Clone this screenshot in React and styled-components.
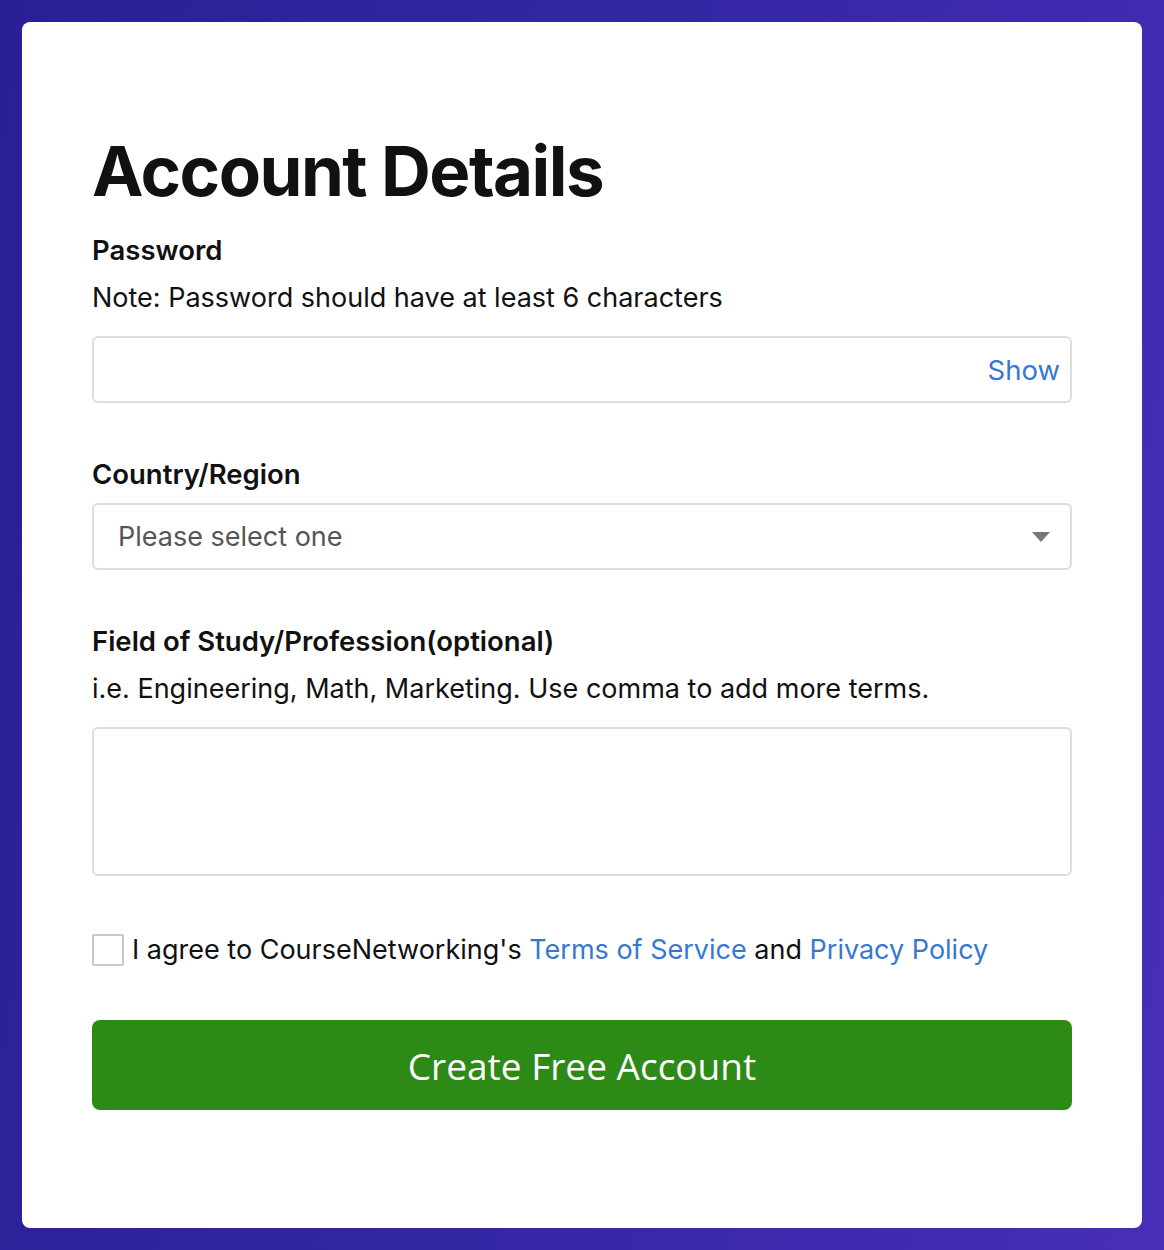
import React, { useState } from 'react';
import styled, { createGlobalStyle } from 'styled-components';

const GlobalStyle = createGlobalStyle`
  html, body {
    margin: 0;
    padding: 0;
  }
  body {
    font-family: Inter, 'Noto Sans', sans-serif;
    color: #111;
  }
  * {
    box-sizing: border-box;
  }
`;

const App = () => {
  const [showPassword, setShowPassword] = useState(false);
  const [agreed, setAgreed] = useState(false);

  return (
    <>
      <GlobalStyle />
      <Page>
        <Card>
          <Title>Account Details</Title>
          <Field>
            <Label>Password</Label>
            <Hint>Note: Password should have at least 6 characters</Hint>
            <InputWrap>
              <Input type={showPassword ? 'text' : 'password'} />
              <ShowButton onClick={() => setShowPassword(!showPassword)}>
                {showPassword ? 'Hide' : 'Show'}
              </ShowButton>
            </InputWrap>
          </Field>
          <Field>
            <Label>Country/Region</Label>
            <SelectWrap>
              <Select defaultValue="">
                <option value="">Please select one</option>
                <option value="us">United States</option>
                <option value="ca">Canada</option>
              </Select>
              <Caret />
            </SelectWrap>
          </Field>
          <Field>
            <Label>Field of Study/Profession(optional)</Label>
            <Hint>i.e. Engineering, Math, Marketing. Use comma to add more terms.</Hint>
            <TextArea />
          </Field>
          <AgreeRow>
            <Checkbox
              type="checkbox"
              checked={agreed}
              onChange={(e) => setAgreed(e.target.checked)}
            />
            <span>
              I agree to CourseNetworking's <Link href="#">Terms of Service</Link> and{' '}
              <Link href="#">Privacy Policy</Link>
            </span>
          </AgreeRow>
          <SubmitButton>Create Free Account</SubmitButton>
        </Card>
      </Page>
    </>
  );
};

export default App;

const Page = styled.div`
  width: 1164px;
  height: 1250px;
  padding: 22px;
  background: linear-gradient(100deg, #2a1f96 0%, #3427a4 50%, #482db8 100%);
`;

const Card = styled.div`
  background: #fff;
  border-radius: 8px;
  height: 100%;
  padding: 115px 70px 0;
  display: flex;
  flex-direction: column;
`;

const Title = styled.h1`
  margin: 0 0 28px;
  font-family: Inter, sans-serif;
  font-size: 69px;
  font-weight: 700;
  letter-spacing: -1.5px;
  line-height: 1;
  color: #111;
`;

const Field = styled.div`
  display: flex;
  flex-direction: column;
  margin-bottom: 55px;
`;

const Label = styled.label`
  font-size: 27.5px;
  font-weight: 600;
  line-height: 32px;
  margin-bottom: 13px;
`;

const Hint = styled.div`
  font-size: 27px;
  line-height: 32px;
  margin-top: 3px;
  margin-bottom: 22px;
`;

const InputWrap = styled.div`
  position: relative;
  height: 67px;
`;

const Input = styled.input`
  width: 100%;
  height: 100%;
  border: 2px solid #ddd;
  border-radius: 6px;
  font-size: 27px;
  padding: 0 100px 0 24px;
  outline: none;
`;

const ShowButton = styled.button`
  position: absolute;
  right: 12px;
  top: 50%;
  transform: translateY(-50%);
  border: none;
  background: none;
  font-family: Inter, sans-serif;
  font-size: 27.5px;
  color: #3777d2;
  cursor: pointer;
  padding: 0;
`;

const SelectWrap = styled.div`
  position: relative;
  height: 67px;
`;

const Select = styled.select`
  width: 100%;
  height: 100%;
  appearance: none;
  border: 2px solid #ddd;
  border-radius: 6px;
  background: #fff;
  font-family: Inter, sans-serif;
  font-size: 27px;
  color: #555;
  padding: 0 60px 0 24px;
  outline: none;
`;

const Caret = styled.span`
  position: absolute;
  right: 22px;
  top: 50%;
  transform: translateY(-50%);
  width: 0;
  height: 0;
  border-left: 9px solid transparent;
  border-right: 9px solid transparent;
  border-top: 10px solid #777;
  pointer-events: none;
`;

const TextArea = styled.textarea`
  height: 149px;
  border: 2px solid #ddd;
  border-radius: 6px;
  resize: none;
  font-size: 27px;
  padding: 16px 24px;
  outline: none;
`;

const AgreeRow = styled.label`
  display: flex;
  align-items: center;
  gap: 8px;
  font-size: 27px;
  line-height: 32px;
  margin-top: 3px;
  margin-bottom: 54px;
  cursor: pointer;
`;

const Checkbox = styled.input`
  appearance: none;
  width: 32px;
  height: 32px;
  margin: 0;
  border: 2px solid #c8c8c8;
  border-radius: 2px;
  background: #fff;
  flex-shrink: 0;
  &:checked {
    background: #3777d2;
    border-color: #3777d2;
  }
`;

const Link = styled.a`
  color: #3777d2;
  text-decoration: none;
`;

const SubmitButton = styled.button`
  height: 90px;
  border: none;
  border-radius: 8px;
  background: #2d8a17;
  color: #fff;
  font-family: 'Open Sans', sans-serif;
  font-size: 37px;
  font-weight: 500;
  cursor: pointer;
`;
